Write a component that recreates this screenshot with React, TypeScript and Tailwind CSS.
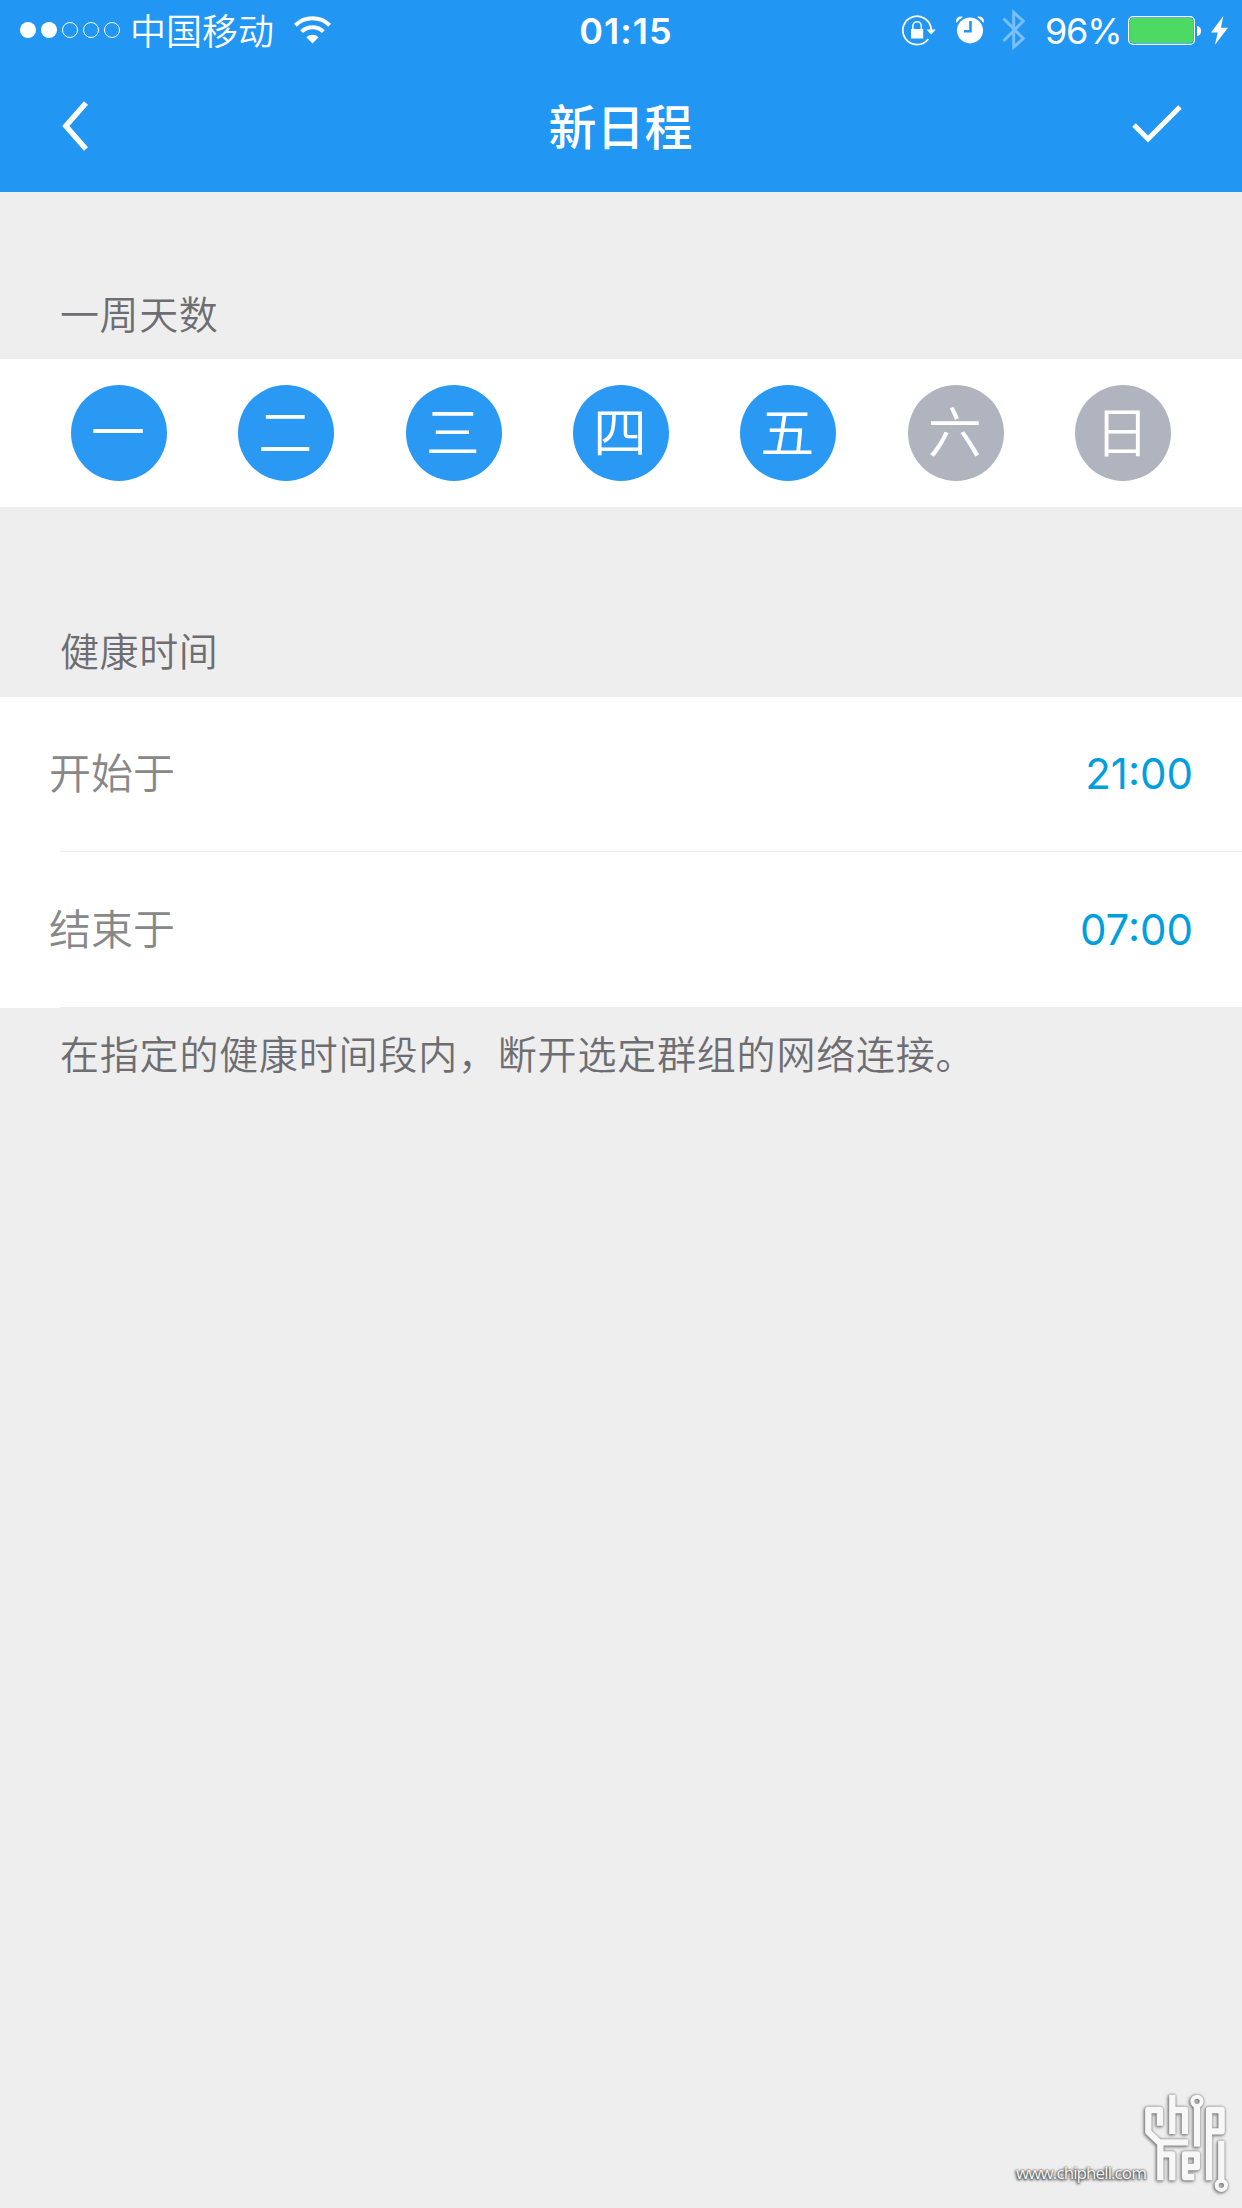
import { useState } from "react";

// ==================== Constants ====================

const FONT = "font-['Inter','Noto_Sans_CJK_SC',sans-serif]";

const WEEK_DAYS = ["一", "二", "三", "四", "五", "六", "日"];

const TIME_ROWS = [
    { id: "start", label: "开始于", value: "21:00", height: "h-[154px] pb-[2px]" },
    { id: "end", label: "结束于", value: "07:00", height: "h-[155px]" },
];

// ==================== Status bar ====================

function SignalDots() {
    return (
        <svg className="w-[102px] h-4 shrink-0" viewBox="0 0 102 16" fill="none" stroke="white">
            <circle cx="8" cy="8" r="8" fill="white" stroke="none" />
            <circle cx="29" cy="8" r="8" fill="white" stroke="none" />
            <circle cx="50" cy="8" r="7.5" />
            <circle cx="71" cy="8" r="7.5" />
            <circle cx="92" cy="8" r="7.5" />
        </svg>
    );
}

function WifiIcon() {
    return (
        <svg className="w-[37px] h-7 shrink-0" viewBox="0 0 37 28" fill="none" stroke="white" strokeWidth="4">
            <path d="M1.4 9.2a24.6 24.6 0 0 1 34.2 0" />
            <path d="M7.6 15.6a15.6 15.6 0 0 1 21.8 0" />
            <path d="M12.4 21.2a8.8 8.8 0 0 1 12.2 0L18.5 27.5z" fill="white" stroke="none" />
        </svg>
    );
}

function RotationLockIcon() {
    return (
        <svg className="w-[34px] h-[31px]" viewBox="0 0 34 31" fill="none" stroke="white">
            <path d="M29.2 15.5A14.2 14.2 0 1 0 26.3 24" strokeWidth="1.7" />
            <path d="M24.5 14.5h9.3l-4.6 5z" fill="white" stroke="none" />
            <path d="M9 14h12.2v9.5H9z" fill="white" stroke="none" />
            <path d="M10.9 14.5v-3.6a4.2 4.2 0 0 1 8.4 0v3.6" strokeWidth="1.5" />
        </svg>
    );
}

function AlarmIcon() {
    return (
        <svg className="w-7 h-7" viewBox="0 0 28 28" fill="white">
            <circle cx="14" cy="14.4" r="13" />
            <path d="M.3 6.5C-.8 2.5 2 0 6.2.6L6.4 1.4Q3 3.2.9 6.6z" />
            <path d="M27.7 6.5C28.8 2.5 26 0 21.8.6L21.6 1.4Q25 3.2 27.1 6.6z" />
            <path d="M14.5 5v10.3H8" fill="none" stroke="#2196f3" strokeWidth="2.6" />
        </svg>
    );
}

function BluetoothIcon() {
    return (
        <svg className="w-6 h-[42px]" viewBox="0 0 24 42" fill="none" stroke="#79c0f8" strokeWidth="3">
            <path d="M1.5 9.5 21.2 29.5 11.7 38.2V3.4L21.2 12 1.5 32" />
        </svg>
    );
}

function BatteryIcon() {
    return (
        <svg className="w-[74px] h-[29px]" viewBox="0 0 74 29">
            <rect x=".6" y=".6" width="65.8" height="27.8" rx="4.5" fill="none" stroke="white" strokeWidth="1.2" />
            <rect x="2" y="2" width="63" height="25" rx="3.2" fill="#4cd964" />
            <path d="M69 10v10q4-.6 4-5t-4-5z" fill="white" />
        </svg>
    );
}

function StatusBar() {
    return (
        <div className="grid grid-cols-[1fr_auto_1fr] items-center h-15 pl-5 pr-[14px] text-white text-[36px] leading-none">
            <div className="flex items-center">
                <SignalDots />
                <span className="ml-2 pt-[3px] font-[350]">中国移动</span>
                <span className="ml-5"><WifiIcon /></span>
            </div>
            <span className="pt-[2px] pl-1 font-semibold tracking-[1px]">01:15</span>
            <div className="flex items-center justify-end">
                <RotationLockIcon />
                <span className="ml-5"><AlarmIcon /></span>
                <span className="ml-[18px]"><BluetoothIcon /></span>
                <span className="ml-[19px] pt-[2px] w-[73px] font-normal tracking-[-1.2px]">96%</span>
                <span className="ml-[10px]"><BatteryIcon /></span>
                <svg className="w-[17px] h-[29px] ml-[9px]" viewBox="0 0 17 29" fill="white">
                    <path d="M12.3 0 0 16.5h6.8L3.8 29 17 11.8H10z" />
                </svg>
            </div>
        </div>
    );
}

// ==================== Navigation ====================

function NavBar() {
    return (
        <div className="grid grid-cols-[1fr_auto_1fr] items-center h-33 pl-[62px] pr-[63px] text-white">
            <button aria-label="返回">
                <svg className="w-[27px] h-[50px]" viewBox="0 0 27 50" fill="none" stroke="white" strokeWidth="5.4">
                    <path d="M24 2 3.8 25 24 48" />
                </svg>
            </button>
            <h1 className="pt-[3px] text-[48px] leading-none font-medium">新日程</h1>
            <button aria-label="保存" className="justify-self-end -mr-[3px] pb-[5px]">
                <svg className="w-[50px] h-[38px]" viewBox="0 0 50 38" fill="none" stroke="white" strokeWidth="5">
                    <path d="M2 20 16 34 48 2" />
                </svg>
            </button>
        </div>
    );
}

// ==================== Watermark ====================

function CircuitLogo() {
    return (
        <svg
            className="w-24 h-[110px] [filter:drop-shadow(0_0_1px_#888)_drop-shadow(-1px_1px_1.5px_#777)]"
            viewBox="0 0 288 330"
            fill="none"
            stroke="#f7f7f7"
            strokeWidth="19"
            strokeLinejoin="round"
        >
            {/* upper traces */}
            <path d="M66 113V66H31V132L63 163H151" />
            <path d="M103 20V138M103 66H141V138" />
            <path d="M177 50V176" />
            <circle cx="177" cy="40" r="14" strokeWidth="12" />
            <path d="M213 277V66H251V130H213" />
            {/* lower traces */}
            <path d="M67 160V277M67 199H103V277" />
            <path d="M169 267H141V199H177V237H141V267" />
            <path d="M250 158V278" />
            <circle cx="250" cy="292" r="14" strokeWidth="12" />
        </svg>
    );
}

function Watermark() {
    return (
        <div className="absolute right-2 bottom-[10px] flex items-end">
            <span className="-mr-[8px] mb-[13px] font-['Open_Sans',sans-serif] text-[17px] leading-6 tracking-[-0.9px] text-[#f7f7f7] [text-shadow:0_0_2px_#444,-1px_1px_3px_#444,0_1px_3px_#666]">
                www.chiphell.com
            </span>
            <CircuitLogo />
        </div>
    );
}

// ==================== Page ====================

export default function App() {
    const [activeDays, setActiveDays] = useState([0, 1, 2, 3, 4]);

    const toggleDay = (day: number) => {
        setActiveDays((prev) => (prev.includes(day) ? prev.filter((d) => d !== day) : [...prev, day]));
    };

    return (
        <div className={`relative w-[1242px] h-[2208px] overflow-hidden bg-[#eeeeee] ${FONT}`}>
            <header className="bg-[#2196f3]">
                <StatusBar />
                <NavBar />
            </header>

            {/* Days of the week */}
            <h2 className="pt-[101px] h-[167px] pl-[60px] text-[39px] leading-[44px] tracking-[0.6px] font-[350] text-[#6d6d72]">一周天数</h2>
            <div className="flex items-center justify-between h-[148px] px-[71px] bg-white">
                {WEEK_DAYS.map((name, day) => (
                    <button
                        key={name}
                        onClick={() => toggleDay(day)}
                        className={`size-24 pr-[2px] pt-[2px] rounded-full text-white text-[54px] leading-none font-[350] ${activeDays.includes(day) ? "bg-[#2999f3]" : "bg-[#b0b4be]"}`}
                    >
                        {name}
                    </button>
                ))}
            </div>

            {/* Time range */}
            <h2 className="pt-[123px] h-[190px] pl-[60px] text-[39px] leading-[44px] tracking-[0.6px] font-[350] text-[#6d6d72]">健康时间</h2>
            <div className="bg-white text-[42px]">
                {TIME_ROWS.map((row) => (
                    <div key={row.id}>
                        <div className={`flex items-center justify-between pl-[49px] pr-[49px] ${row.height}`}>
                            <span className="font-[350] text-[#888888]">{row.label}</span>
                            <span className="font-normal text-[#00a0e0]">{row.value}</span>
                        </div>
                        <div className="h-px ml-[60px] bg-[#eeeeee]" />
                    </div>
                ))}
            </div>
            <p className="pt-[25px] pl-[60px] text-[39px] leading-[44px] tracking-[0.8px] font-[350] text-[#6d6d72]">
                在指定的健康时间段内，断开选定群组的网络连接。
            </p>

            <Watermark />
        </div>
    );
}
